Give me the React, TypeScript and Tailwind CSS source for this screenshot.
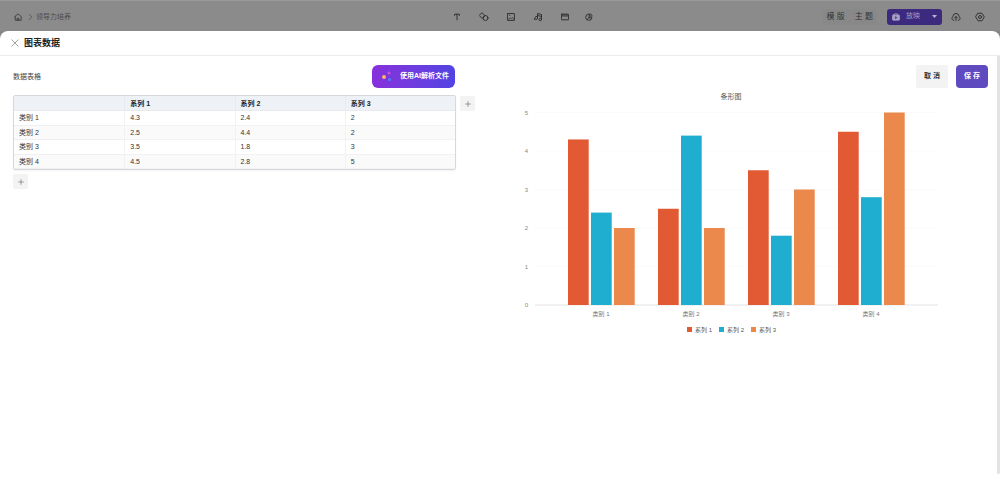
import React from "react";

const series = [
  { name: "系列 1", color: "#e25a33" },
  { name: "系列 2", color: "#1fadd0" },
  { name: "系列 3", color: "#ea894b" },
];

const rows = [
  { name: "类别 1", values: [4.3, 2.4, 2] },
  { name: "类别 2", values: [2.5, 4.4, 2] },
  { name: "类别 3", values: [3.5, 1.8, 3] },
  { name: "类别 4", values: [4.5, 2.8, 5] },
];

function Icon({ children, className = "size-2.5" }: { children: React.ReactNode; className?: string }) {
  return (
    <svg viewBox="0 0 20 20" className={className} fill="none" stroke="currentColor" strokeWidth="2" strokeLinecap="round" strokeLinejoin="round" aria-hidden="true">
      {children}
    </svg>
  );
}

function ToolButton({ label, children }: { label: string; children: React.ReactNode }) {
  return (
    <button type="button" aria-label={label} className="flex size-4 items-center justify-center">
      {children}
    </button>
  );
}

function TopBar() {
  return (
    <header className="grid h-8 grid-cols-[1fr_auto_1fr] items-center border-t border-[#999999] bg-[#8b8b8b] pr-[15px] pl-[13px] text-[#333333]">
      <nav className="flex items-center text-[#4c4c4c]">
        <a href="#home" aria-label="首页" className="mr-1 flex size-2.5 items-center justify-center text-[#333333]">
          <Icon className="size-2">
            <path d="M2 9 10 2l8 7v9H3V9M8 18v-5h4v5" />
          </Icon>
        </a>
        <Icon className="size-2">
          <path d="m6 4 6 6-6 6" />
        </Icon>
        <a href="#deck" className="ml-px text-[7px] leading-4">领导力培养</a>
      </nav>
      <div className="flex gap-[11px] pl-[47px]">
        <ToolButton label="文本">
          <Icon className="size-2"><path d="M4 6V3h12v3M10 3v14" strokeWidth="2.500" /></Icon>
        </ToolButton>
        <ToolButton label="形状">
          <Icon>
            <path d="M6.500 2 12 7.500 6.500 13 1 7.500z" />
            <circle cx="13" cy="12" r="5" />
          </Icon>
        </ToolButton>
        <ToolButton label="图片">
          <Icon className="size-2">
            <rect x="1" y="1.500" width="18" height="17" rx="1" strokeWidth="2.500" />
            <path d="m3 16 5-4 3 2 3-3 3 5M6 6h1" />
          </Icon>
        </ToolButton>
        <ToolButton label="音频">
          <Icon>
            <path d="M9 13V3l8 2v10M9 7l8 2" />
            <circle cx="14.500" cy="15" r="2.500" />
            <path d="M9 9H5.500L2.500 14.500h5" />
          </Icon>
        </ToolButton>
        <ToolButton label="视频">
          <Icon className="size-2">
            <rect x="1" y="3" width="18" height="14" rx="1" strokeWidth="2.500" />
            <path d="M1 7.500h18M5 3v4M10 3v4M15 3v4" />
          </Icon>
        </ToolButton>
        <div className="-ml-[3px] flex">
          <ToolButton label="图表">
            <Icon className="size-2">
              <path d="M8 2.500A8 8 0 1 0 17.500 12H10V3" strokeWidth="2.500" />
              <path d="M13 2a7 7 0 0 1 5 6h-5zM10 12l-5 4" />
            </Icon>
          </ToolButton>
        </div>
      </div>
      <div className="flex items-center justify-end">
        <div className="flex h-4 items-center rounded-sm bg-[#888888] px-1 text-[8px]">
          <button type="button">模 版</button>
          <button type="button" className="ml-2.5">主 题</button>
        </div>
        <button type="button" className="ml-2.5 flex h-4 w-[55px] items-center rounded-[3px] bg-[#3b2a7e] px-[5px] text-[7px] text-[#a69fc4]">
          <Icon className="size-2">
            <rect x="1" y="5" width="18" height="13" rx="2" fill="currentColor" />
            <path d="M6 4V2h8v2" />
            <path d="m8 8 5 3.500L8 15z" fill="#3b2a7e" stroke="none" />
          </Icon>
          <span className="ml-1.5">放映</span>
          <svg viewBox="0 0 10 6" className="ml-auto h-[3px] w-[5px]" aria-hidden="true"><path d="M0 0h10L5 6z" fill="#b9b3d2" /></svg>
        </button>
        <button type="button" aria-label="上传到云端" className="ml-[9px] flex">
          <Icon>
            <path d="M5.500 16.500H5A4 4 0 0 1 4 9a6 6 0 0 1 12 0 4 4 0 0 1-1 7.500h-.5M10 17V9.500M7 12l3-3 3 3" />
          </Icon>
        </button>
        <button type="button" aria-label="设置" className="ml-3.5 flex">
          <Icon>
            <path d="M6 2.500h8l4.500 7.500-4.500 7.500H6L1.500 10z" />
            <circle cx="10" cy="10" r="3" />
          </Icon>
        </button>
      </div>
    </header>
  );
}

function DataTable() {
  return (
    <table aria-labelledby="table-title" className="h-[75px] w-full table-fixed border-separate border-spacing-0 rounded-xs border border-[#d5d9de] text-left text-[7px] leading-[13px] text-[#333333] shadow-xs">
      <thead>
        <tr className="bg-[#eef1f6]">
          <td className="h-[15px] border-b border-[#e8eaee] p-0" />
          {series.map((s) => (
            <th key={s.name} scope="col" className="border-b border-l border-[#e8eaee] px-[5px] py-0 font-bold text-[#222222]">{s.name}</th>
          ))}
        </tr>
      </thead>
      <tbody>
        {rows.map((row) => (
          <tr key={row.name} className="even:bg-[#fafafa]">
            <th scope="row" className="border-b border-[#efefef] px-[5px] py-0 font-normal">{row.name}</th>
            {row.values.map((v, i) => (
              <td key={i} className="border-b border-l border-[#f2f2f2] px-[5px] py-0">{v}</td>
            ))}
          </tr>
        ))}
      </tbody>
    </table>
  );
}

const BASE = 217;
const UNIT = 38.5;

function BarChart() {
  return (
    <svg viewBox="0 0 523 252" className="w-full" role="img" aria-label="条形图">
      <text x="257" y="11" textAnchor="middle" fontSize="7" fill="#555555">条形图</text>
      {[0, 1, 2, 3, 4, 5].map((n) => (
        <g key={n}>
          <line x1="61" x2="464" y1={BASE - n * UNIT} y2={BASE - n * UNIT} stroke={n ? "#fbfbfb" : "#e3e3e3"} />
          <text x="54" y={BASE - n * UNIT + 2} textAnchor="end" fontSize="6" fill="#888888">{n}</text>
        </g>
      ))}
      {rows.map((row, r) => (
        <g key={row.name}>
          {row.values.map((v, i) => (
            <rect key={i} x={94 + r * 90 + i * 23} y={BASE - v * UNIT} width="20.700" height={v * UNIT} fill={series[i].color} />
          ))}
          <text x={127 + r * 90} y="228" textAnchor="middle" fontSize="6" fill="#777777">{row.name}</text>
        </g>
      ))}
      {series.map((s, i) => (
        <g key={s.name}>
          <rect x={213 + i * 32} y="239" width="5" height="5" fill={s.color} />
          <text x={221 + i * 32} y="244" fontSize="6" fill="#555555">{s.name}</text>
        </g>
      ))}
    </svg>
  );
}

export default function App() {
  return (
    <div className="flex min-h-screen flex-col bg-white font-['Liberation_Sans','Noto_Sans_CJK_SC',sans-serif]">
      <TopBar />
      <div className="relative -mt-px bg-[#858585]">
        <div role="dialog" aria-labelledby="dialog-title" className="rounded-t-lg bg-white">
          <div className="flex h-[25px] items-center gap-[5px] border-b border-[#ededed] pl-[11px]">
            <button type="button" aria-label="关闭" className="flex size-2 items-center justify-center text-[#888888]">
              <Icon className="size-2"><path d="m2 2 16 16M18 2 2 18" /></Icon>
            </button>
            <h1 id="dialog-title" className="text-[9px] leading-4 font-bold text-[#222222]">图表数据</h1>
          </div>
          <div className="flex min-h-[418px]">
            <section className="w-[47.5%] pt-[9px] pl-[13px]">
              <div className="flex items-center justify-between pr-5">
                <h2 id="table-title" className="text-[7px] leading-4 text-[#444444]">数据表格</h2>
                <button type="button" className="flex h-[23px] w-[83px] items-center gap-1.5 rounded-md bg-linear-to-r from-[#8730db] to-[#5143e3] pl-2 text-[7px] font-bold text-white">
                  <svg viewBox="0 0 14 12" className="h-3 w-3.5" aria-hidden="true">
                    <circle cx="4" cy="6" r="2" fill="#ffb36b" />
                    <circle cx="9" cy="2" r="1.500" fill="#c05bd8" />
                    <circle cx="9.500" cy="8.500" r="1.500" fill="#4187f2" />
                  </svg>
                  <span className="whitespace-nowrap">使用AI解析文件</span>
                </button>
              </div>
              <div className="mt-[7px] flex items-start gap-1">
                <div className="flex-1">
                  <DataTable />
                  <button type="button" aria-label="添加行" className="mt-1 flex size-[15px] items-center justify-center rounded-xs bg-[#f3f3f3] text-[#666666]">
                    <Icon className="size-1.5"><path d="M10 2v16M2 10h16" /></Icon>
                  </button>
                </div>
                <button type="button" aria-label="添加列" className="mt-px flex size-[15px] items-center justify-center rounded-xs bg-[#f3f3f3] text-[#666666]">
                  <Icon className="size-1.5"><path d="M10 2v16M2 10h16" /></Icon>
                </button>
              </div>
            </section>
            <section className="-ml-px min-w-0 flex-1 pt-[9px]">
              <div className="flex items-center justify-end gap-2 pr-[9px]">
                <button type="button" className="h-[23px] w-8 rounded-xs bg-[#f3f3f3] text-[7px] font-bold text-[#333333]">取 消</button>
                <button type="button" className="h-[23px] w-8 rounded-sm bg-[#5f4abf] text-[7px] font-bold text-white">保 存</button>
              </div>
              <BarChart />
            </section>
            <div className="w-[3px] rounded-b-xs bg-[#e2e3e6]" />
          </div>
        </div>
      </div>
    </div>
  );
}
